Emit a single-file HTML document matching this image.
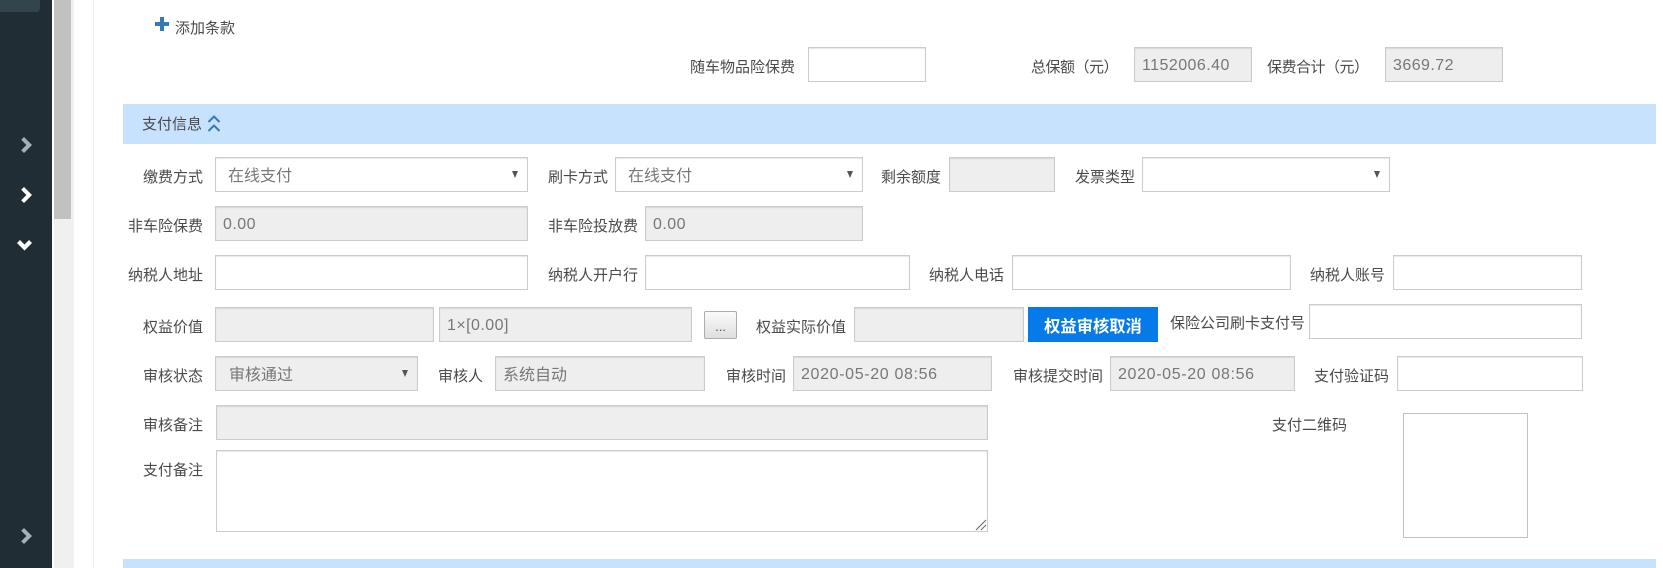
<!DOCTYPE html>
<html lang="zh">
<head>
<meta charset="utf-8">
<title>支付信息</title>
<style>
html,body{margin:0;padding:0;background:#fff;}
body{position:relative;width:1663px;height:568px;overflow:hidden;font-family:"Liberation Sans","Noto Sans CJK SC",sans-serif;font-size:15px;color:#4a4a4a;}
div,span{position:absolute;box-sizing:border-box;}
.l{white-space:nowrap;line-height:20px;height:20px;font-size:15px;color:#4a4a4a;}
.i{border:1px solid #ccc;box-shadow:inset 0 1px 1px rgba(0,0,0,.1);background:#fff;height:35px;white-space:nowrap;font-size:16px;color:#777;line-height:35px;padding-left:7px;}
.c{line-height:37px;}
.n{letter-spacing:.45px;}
.t{letter-spacing:.65px;}
.d{background:#eee;}
.s:after{content:"";position:absolute;right:9px;top:13px;border-left:3px solid transparent;border-right:3px solid transparent;border-top:7px solid #555;}
svg{position:absolute;overflow:visible;}
</style>
</head>
<body>
<div style="left:0;top:0;width:52px;height:568px;background:#202d34;"></div>
<div style="left:0;top:0;width:40px;height:12px;background:#33444d;border-radius:0 0 4px 0;"></div>
<div style="left:54px;top:0;width:20px;height:568px;background:#f0f0f0;"></div>
<div style="left:54px;top:0;width:17px;height:219px;background:#c1c1c1;"></div>
<div style="left:93px;top:0;width:1px;height:568px;background:#e6f0f8;"></div>

<svg style="left:0;top:0" width="52" height="568">
<path d="M21.200 139.800L24 137 32 145 24 153 21.200 150.200 26.400 145z" fill="#a3b1b8"/>
<path d="M21.200 189.800L24 187 32 195 24 203 21.200 200.200 26.400 195z" fill="#fff"/>
<path d="M17 243L20 240 24.500 244.500 29 240 32 243 24.500 250.500z" fill="#fff"/>
<path d="M21.200 530.800L24 528 32 536 24 544 21.200 541.200 26.400 536z" fill="#a3b1b8"/>
</svg>

<svg style="left:155px;top:17px" width="14" height="14"><path d="M5 0h4v5h5v4H9v5H5V9H0V5h5z" fill="#337ab7"/></svg>
<div class="l" style="left:175px;top:19px;">添加条款</div>

<div class="l" style="left:690px;top:58px;">随车物品险保费</div>
<div class="i" style="left:808px;top:47px;width:118px;"></div>
<div class="l" style="left:1031px;top:58px;letter-spacing:-.5px;">总保额（元）</div>
<div class="i d n" style="left:1134px;top:47px;width:118px;">1152006.40</div>
<div class="l" style="left:1267px;top:58px;letter-spacing:-.5px;">保费合计（元）</div>
<div class="i d n" style="left:1385px;top:47px;width:118px;">3669.72</div>

<div style="left:123px;top:104px;width:1533px;height:40px;background:#c7e2fd;"></div>
<div class="l" style="left:142px;top:115px;">支付信息</div>
<svg style="left:207px;top:115px" width="14" height="18"><path d="M1.500 7L7 1.500 12.500 7M1.500 16L7 10.500 12.500 16" fill="none" stroke="#337ab7" stroke-width="2"/></svg>

<div class="l" style="left:143px;top:168px;">缴费方式</div>
<div class="i s c" style="left:215px;top:157px;width:313px;padding-left:12px;">在线支付</div>
<div class="l" style="left:548px;top:168px;">刷卡方式</div>
<div class="i s c" style="left:615px;top:157px;width:248px;padding-left:12px;">在线支付</div>
<div class="l" style="left:881px;top:168px;">剩余额度</div>
<div class="i d" style="left:949px;top:157px;width:106px;"></div>
<div class="l" style="left:1075px;top:168px;">发票类型</div>
<div class="i s" style="left:1142px;top:157px;width:248px;"></div>

<div class="l" style="left:128px;top:217px;">非车险保费</div>
<div class="i d n" style="left:215px;top:206px;width:313px;">0.00</div>
<div class="l" style="left:548px;top:217px;">非车险投放费</div>
<div class="i d n" style="left:645px;top:206px;width:218px;">0.00</div>

<div class="l" style="left:128px;top:266px;">纳税人地址</div>
<div class="i" style="left:215px;top:255px;width:313px;"></div>
<div class="l" style="left:548px;top:266px;">纳税人开户行</div>
<div class="i" style="left:645px;top:255px;width:265px;"></div>
<div class="l" style="left:929px;top:266px;">纳税人电话</div>
<div class="i" style="left:1012px;top:255px;width:279px;"></div>
<div class="l" style="left:1310px;top:266px;">纳税人账号</div>
<div class="i" style="left:1393px;top:255px;width:189px;"></div>

<div class="l" style="left:143px;top:318px;">权益价值</div>
<div class="i d" style="left:215px;top:307px;width:219px;"></div>
<div class="i d n" style="left:439px;top:307px;width:253px;">1×[0.00]</div>
<div style="left:704px;top:311px;width:33px;height:28px;border:1px solid #adadad;border-radius:2px;background:linear-gradient(#fbfbfb,#dedede);text-align:center;font-size:13px;line-height:30px;color:#555;">...</div>
<div class="l" style="left:756px;top:318px;">权益实际价值</div>
<div class="i d" style="left:854px;top:307px;width:170px;"></div>
<div style="left:1028px;top:307px;width:130px;height:35px;background:#057ae8;color:#fff;font-size:16.300px;line-height:40px;text-align:center;font-weight:bold;white-space:nowrap;">权益审核取消</div>
<div class="l" style="left:1170px;top:314px;">保险公司刷卡支付号</div>
<div class="i" style="left:1309px;top:304px;width:273px;"></div>

<div class="l" style="left:143px;top:367px;">审核状态</div>
<div class="i d s c" style="left:215px;top:356px;width:203px;padding-left:13px;">审核通过</div>
<div class="l" style="left:438px;top:367px;">审核人</div>
<div class="i d c" style="left:495px;top:356px;width:210px;">系统自动</div>
<div class="l" style="left:726px;top:367px;">审核时间</div>
<div class="i d t" style="left:793px;top:356px;width:199px;">2020-05-20 08:56</div>
<div class="l" style="left:1013px;top:367px;">审核提交时间</div>
<div class="i d t" style="left:1110px;top:356px;width:185px;">2020-05-20 08:56</div>
<div class="l" style="left:1314px;top:367px;">支付验证码</div>
<div class="i" style="left:1397px;top:356px;width:186px;"></div>

<div class="l" style="left:143px;top:416px;">审核备注</div>
<div class="i d" style="left:216px;top:405px;width:772px;"></div>
<div class="l" style="left:143px;top:461px;">支付备注</div>
<div class="i" style="left:216px;top:450px;width:772px;height:82px;"></div>
<svg style="left:975px;top:519px" width="12" height="12"><path d="M1 11L11 1M6 11L11 6" stroke="#666" stroke-width="1"/></svg>

<div class="l" style="left:1272px;top:416px;">支付二维码</div>
<div style="left:1403px;top:413px;width:125px;height:125px;border:1px solid #c2c2c2;"></div>

<div style="left:123px;top:559px;width:1533px;height:9px;background:#c7e2fd;"></div>
</body>
</html>
